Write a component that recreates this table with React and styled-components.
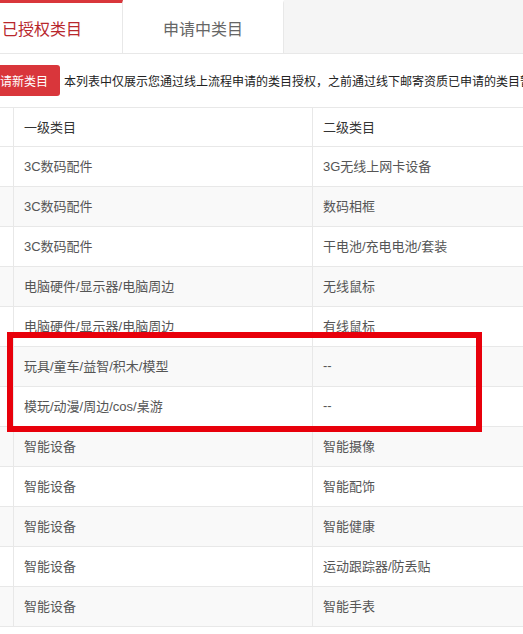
import styled, { createGlobalStyle } from 'styled-components'

const red = '#d9363b'
const darkRed = '#b8272c'
const line = '#e8e8e8'
const stripe = '#f9f9f9'

const GlobalStyle = createGlobalStyle`
  html, body {
    margin: 0;
    padding: 0;
    background: #fff;
    overflow: hidden;
  }
  body {
    font-family: "Liberation Sans", "Noto Sans CJK SC", sans-serif;
    color: #333;
  }
`

// the view is scrolled sideways a little, so the page starts left of the window
const Page = styled.div`
  position: relative;
  margin-left: -38px;
  width: 700px;
`

const TabBar = styled.div`
  display: flex;
  height: 53px;
  background: #f5f5f5;
  border-bottom: 1px solid ${line};
`

const Tab = styled.div`
  width: 161px;
  box-sizing: border-box;
  display: flex;
  align-items: center;
  justify-content: center;
  background: #fff;
  border-right: 1px solid ${line};
  border-top: 3px solid ${(props) => (props.active ? red : 'transparent')};
  font-size: 16px;
  padding-bottom: 1px;
  color: ${(props) => (props.active ? darkRed : '#666')};
`

const Notice = styled.div`
  display: flex;
  align-items: center;
  height: 53px;
  padding-left: 14px;
  white-space: nowrap;
`

const ApplyButton = styled.button`
  height: 31px;
  padding: 0 12px;
  border: none;
  border-radius: 3px;
  background: ${red};
  color: #fff;
  font-family: inherit;
  font-size: 12px;
  margin-right: 4px;
`

const NoticeText = styled.span`
  font-size: 12px;
  color: #222;
`

const Table = styled.div`
  margin-left: 14px;
  border-top: 1px solid ${line};
`

const Row = styled.div`
  display: grid;
  grid-template-columns: 38px 299px 1fr;
  height: ${(props) => (props.head ? '39px' : '40px')};
  box-sizing: border-box;
  border-bottom: 1px solid ${line};
  background: ${(props) => (props.striped ? stripe : '#fff')};
`

const Cell = styled.div`
  display: flex;
  align-items: center;
  padding: 0 0 2px 10px;
  box-sizing: border-box;
  border-right: 1px solid ${line};
  font-size: 13px;
  color: ${(props) => (props.head ? '#333' : '#555')};
  &:last-child {
    border-right: none;
  }
`

const Highlight = styled.div`
  position: absolute;
  left: 45px;
  top: 332px;
  width: 475px;
  height: 100px;
  box-sizing: border-box;
  border: 6px solid #e8000b;
  pointer-events: none;
`

const rows = [
  ['3C数码配件', '3G无线上网卡设备'],
  ['3C数码配件', '数码相框'],
  ['3C数码配件', '干电池/充电电池/套装'],
  ['电脑硬件/显示器/电脑周边', '无线鼠标'],
  ['电脑硬件/显示器/电脑周边', '有线鼠标'],
  ['玩具/童车/益智/积木/模型', '--'],
  ['模玩/动漫/周边/cos/桌游', '--'],
  ['智能设备', '智能摄像'],
  ['智能设备', '智能配饰'],
  ['智能设备', '智能健康'],
  ['智能设备', '运动跟踪器/防丢贴'],
  ['智能设备', '智能手表'],
]

export default function App() {
  return (
    <>
      <GlobalStyle />
      <Page>
        <TabBar>
          <Tab active>已授权类目</Tab>
          <Tab>申请中类目</Tab>
        </TabBar>
        <Notice>
          <ApplyButton>申请新类目</ApplyButton>
          <NoticeText>
            本列表中仅展示您通过线上流程申请的类目授权，之前通过线下邮寄资质已申请的类目暂不在此展示
          </NoticeText>
        </Notice>
        <Table>
          <Row head>
            <Cell head />
            <Cell head>一级类目</Cell>
            <Cell head>二级类目</Cell>
          </Row>
          {rows.map(([first, second], i) => (
            <Row key={i} striped={i % 2 === 1}>
              <Cell />
              <Cell>{first}</Cell>
              <Cell>{second}</Cell>
            </Row>
          ))}
        </Table>
        <Highlight />
      </Page>
    </>
  )
}
